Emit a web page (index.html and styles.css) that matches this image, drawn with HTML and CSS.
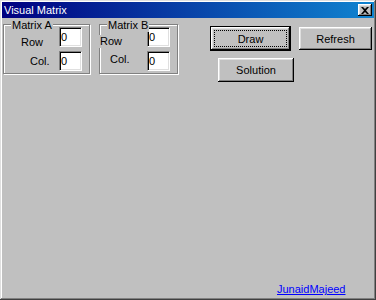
FILE: index.html
```html
<!DOCTYPE html>
<html lang="en">
<head>
    <meta charset="UTF-8">
    <meta name="viewport" content="width=device-width, initial-scale=1.0">
    <title>Visual Matrix</title>
    <link rel="stylesheet" href="styles.css">
</head>
<body>
    <div class="window">
        <div class="titlebar">
            <span class="title">Visual Matrix</span>
            <span class="close">
                <svg width="8" height="7" viewBox="0 0 8 7"><path d="M0 0h2l2 2 2-2h2L5 3.5 8 7H6L4 5 2 7H0l3-3.5z" fill="#000"/></svg>
            </span>
        </div>

        <div class="content">
            <div class="group group-a">
                <span class="legend">Matrix A</span>
                <div class="field">
                    <label class="lbl a-row">Row</label>
                    <input class="num" type="text" value="0">
                </div>
                <div class="field field-2">
                    <label class="lbl a-col">Col.</label>
                    <input class="num" type="text" value="0">
                </div>
            </div>

            <div class="group group-b">
                <span class="legend">Matrix B</span>
                <div class="field">
                    <label class="lbl b-row">Row</label>
                    <input class="num" type="text" value="0">
                </div>
                <div class="field field-2">
                    <label class="lbl b-col">Col.</label>
                    <input class="num" type="text" value="0">
                </div>
            </div>

            <div class="actions">
                <div class="action-row">
                    <button class="btn btn-default">Draw</button>
                    <button class="btn btn-refresh">Refresh</button>
                </div>
                <button class="btn btn-solution">Solution</button>
            </div>
        </div>

        <a class="credit" href="#">JunaidMajeed</a>
    </div>
</body>
</html>
```

FILE: styles.css
```css
body {
    margin: 0;
    font-family: "Liberation Sans", Arial, sans-serif;
    font-size: 11px;
    background-color: #c0c0c0;
}

.window {
    width: 376px;
    height: 300px;
    box-sizing: border-box;
    padding: 2px;
    display: flex;
    flex-direction: column;
    background-color: #c0c0c0;
    box-shadow: inset -1px -1px #404040, inset 1px 1px #dfdfdf,
                inset -2px -2px #808080, inset 2px 2px #fff;
}

/* title bar */
.titlebar {
    height: 16px;
    display: flex;
    align-items: center;
    justify-content: space-between;
    padding: 0 2px 0 2px;
    background: linear-gradient(to right, #000080, #1084d0);
    color: #fff;
}
.title {
    font-size: 11px;
    line-height: 13px;
}
.close {
    width: 14px;
    height: 12px;
    box-sizing: border-box;
    display: flex;
    align-items: center;
    justify-content: center;
    background-color: #c0c0c0;
    box-shadow: inset -1px -1px #000, inset 1px 1px #fff,
                inset -2px -2px #808080, inset 2px 2px #dfdfdf;
}

/* controls */
.content {
    display: flex;
    align-items: flex-start;
    padding: 6px 0 0 1px;
}

.group {
    position: relative;
    box-sizing: border-box;
    height: 50px;
    padding: 2px 7px 2px 0;
    border: 1px solid #808080;
    box-shadow: inset 1px 1px #fff, 1px 1px #fff;
}
.group-a {
    width: 87px;
}
.group-b {
    width: 79px;
    margin-left: 9px;
}
.legend {
    position: absolute;
    top: -6px;
    left: 7px;
    padding: 0 1px;
    line-height: 13px;
    background-color: #c0c0c0;
    color: #000;
}

.field {
    display: flex;
    align-items: flex-start;
    height: 20px;
}
.field-2 {
    margin-top: 4px;
}
.lbl {
    line-height: 13px;
    color: #000;
    background-color: #c0c0c0;
}
.a-row {
    margin: 9px 0 0 17px;
}
.a-col {
    margin: 4px 0 0 26px;
}
.b-row {
    margin: 8px 0 0 -2px;
    padding-left: 2px;
}
.b-col {
    margin: 2px 0 0 10px;
}

.num {
    width: 23px;
    height: 20px;
    box-sizing: border-box;
    margin: 0 0 0 auto;
    padding: 0 0 0 1px;
    border: 1px solid;
    border-color: #808080 #fff #fff #808080;
    box-shadow: inset 1px 1px #000, inset -1px -1px #dfdfdf;
    background-color: #fff;
    font-family: "Liberation Sans", Arial, sans-serif;
    font-size: 11px;
    color: #000;
    outline: none;
}

.actions {
    margin-left: 32px;
    padding-top: 2px;
    display: flex;
    flex-direction: column;
    align-items: flex-start;
}
.action-row {
    display: flex;
    align-items: flex-start;
}
.btn {
    box-sizing: border-box;
    height: 23px;
    padding: 0;
    border: none;
    background-color: #c0c0c0;
    font-family: "Liberation Sans", Arial, sans-serif;
    font-size: 11px;
    color: #000;
    box-shadow: inset -1px -1px #000, inset 1px 1px #fff,
                inset -2px -2px #808080, inset 2px 2px #dfdfdf;
}
.btn-default {
    width: 81px;
    height: 25px;
    border: 1px solid #000;
    outline: 1px dotted #000;
    outline-offset: -5px;
}
.btn-refresh {
    width: 73px;
    margin: 1px 0 0 8px;
}
.btn-solution {
    width: 76px;
    height: 24px;
    margin: 7px 0 0 8px;
}

.credit {
    margin: auto 0 2px 275px;
    align-self: flex-start;
    line-height: 13px;
    color: #0000ff;
    text-decoration: underline;
}
```
